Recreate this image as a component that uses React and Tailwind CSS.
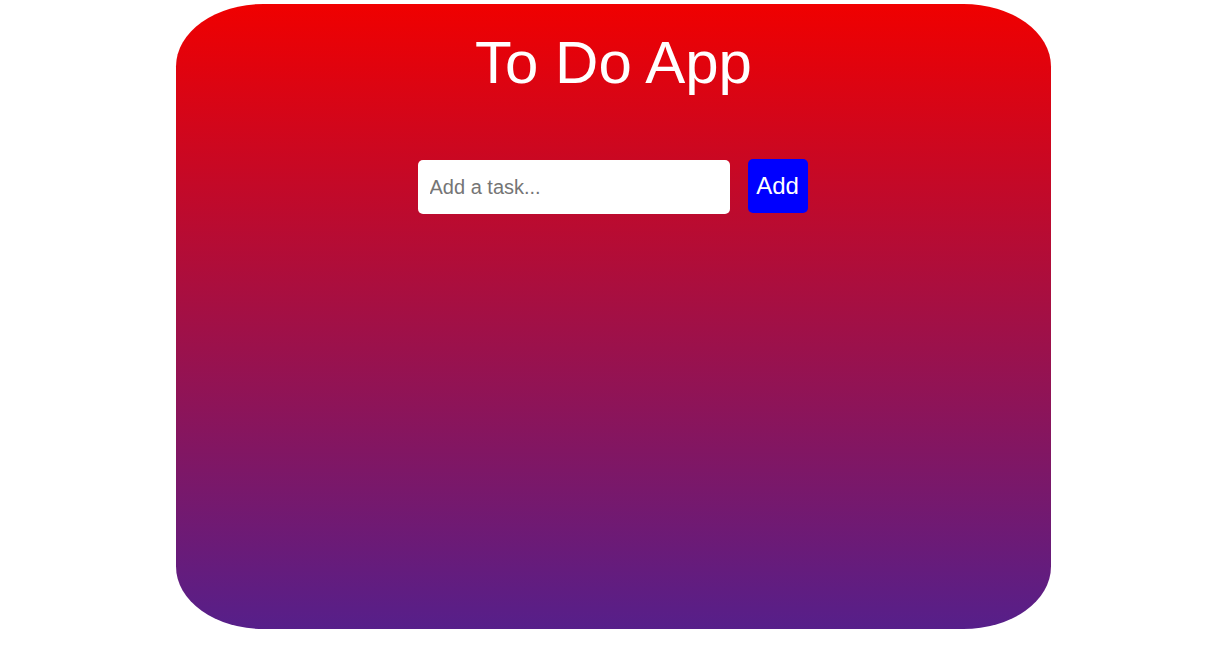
import React, { useState } from 'react';

const App = () => {
  const [tasks, setTasks] = useState([]);
  const [input, setInput] = useState('');

  const addTask = () => {
    if (!input.trim()) return;
    setTasks([...tasks, { id: Date.now(), text: input }]);
    setInput('');
  };

  return (
    <div className="min-h-screen bg-white pt-[4px]" style={{ fontFamily: '"Liberation Sans", Arial, sans-serif' }}>
      <div className="ml-[176px] w-[875px] h-[625px] rounded-[10%] bg-[linear-gradient(to_bottom,#f00000,#561f8a)] pt-[24px] text-white">
        <h1 className="text-center text-[60px] leading-[1.15] font-normal">To Do App</h1>
        <div className="mt-[62px] flex justify-center items-start gap-[18px] pr-[2px]">
          <input
            type="text"
            value={input}
            onChange={(e) => setInput(e.target.value)}
            placeholder="Add a task..."
            className="w-[312px] h-[54px] mt-[1px] rounded-[5px] bg-white px-[12px] text-[20px] text-black placeholder:text-[#757575] outline-none"
          />
          <button
            onClick={addTask}
            className="w-[60px] h-[54px] rounded-[5px] bg-[#0000ff] text-[24px] text-white"
          >
            Add
          </button>
        </div>
        <ul className="mt-4">
          {tasks.map((t) => (
            <li key={t.id} className="text-center text-xl">{t.text}</li>
          ))}
        </ul>
      </div>
    </div>
  );
};

export default App;
